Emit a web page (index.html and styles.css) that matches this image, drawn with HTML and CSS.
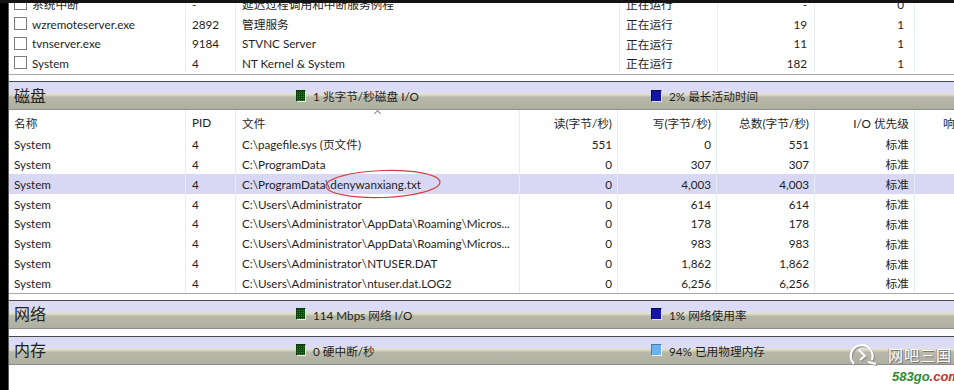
FILE: index.html
```html
<!DOCTYPE html>
<html lang="zh-CN">
<head>
    <meta charset="UTF-8">
    <meta name="viewport" content="width=device-width, initial-scale=1.0">
    <title>资源监视器</title>
    <link rel="stylesheet" href="styles.css">
</head>
<body>
    <div class="topbar"></div>
    <div class="window">
        <div class="proc-box">
            <div class="proc-list">
                <div class="prow">
                    <div class="cell name"><span class="chk"></span>系统中断</div>
                    <div class="cell">-</div>
                    <div class="cell">延迟过程调用和中断服务例程</div>
                    <div class="cell status">正在运行</div>
                    <div class="cell num thr">-</div>
                    <div class="cell num cpu">0</div>
                    <div class="cell last"></div>
                </div>
                <div class="prow">
                    <div class="cell name"><span class="chk"></span>wzremoteserver.exe</div>
                    <div class="cell">2892</div>
                    <div class="cell">管理服务</div>
                    <div class="cell status">正在运行</div>
                    <div class="cell num thr">19</div>
                    <div class="cell num cpu">1</div>
                    <div class="cell last"></div>
                </div>
                <div class="prow">
                    <div class="cell name"><span class="chk"></span>tvnserver.exe</div>
                    <div class="cell">9184</div>
                    <div class="cell">STVNC Server</div>
                    <div class="cell status">正在运行</div>
                    <div class="cell num thr">11</div>
                    <div class="cell num cpu">1</div>
                    <div class="cell last"></div>
                </div>
                <div class="prow">
                    <div class="cell name"><span class="chk"></span>System</div>
                    <div class="cell">4</div>
                    <div class="cell">NT Kernel &amp; System</div>
                    <div class="cell status">正在运行</div>
                    <div class="cell num thr">182</div>
                    <div class="cell num cpu">1</div>
                    <div class="cell last"></div>
                </div>
            </div>
        </div>

        <div class="section-head first">
            <div class="sec-title">磁盘</div>
            <div class="meter"><span class="ico green"></span>1 兆字节/秒磁盘 I/O</div>
            <div class="meter"><span class="ico blue"></span>2% 最长活动时间</div>
        </div>

        <div class="disk">
            <div class="drow head">
                <div class="cell">名称</div>
                <div class="cell">PID</div>
                <div class="cell sorted">文件</div>
                <div class="cell num">读(字节/秒)</div>
                <div class="cell num">写(字节/秒)</div>
                <div class="cell num">总数(字节/秒)</div>
                <div class="cell num">I/O 优先级</div>
                <div class="cell resp">响应时间(毫秒)</div>
            </div>
            <div class="drow">
                <div class="cell">System</div><div class="cell">4</div><div class="cell">C:\pagefile.sys (页文件)</div>
                <div class="cell num">551</div><div class="cell num">0</div><div class="cell num">551</div><div class="cell num">标准</div><div class="cell resp"></div>
            </div>
            <div class="drow">
                <div class="cell">System</div><div class="cell">4</div><div class="cell">C:\ProgramData</div>
                <div class="cell num">0</div><div class="cell num">307</div><div class="cell num">307</div><div class="cell num">标准</div><div class="cell resp"></div>
            </div>
            <div class="drow selected">
                <div class="cell">System</div><div class="cell">4</div><div class="cell">C:\ProgramData\denywanxiang.txt</div>
                <div class="cell num">0</div><div class="cell num">4,003</div><div class="cell num">4,003</div><div class="cell num">标准</div><div class="cell resp"></div>
            </div>
            <div class="drow">
                <div class="cell">System</div><div class="cell">4</div><div class="cell">C:\Users\Administrator</div>
                <div class="cell num">0</div><div class="cell num">614</div><div class="cell num">614</div><div class="cell num">标准</div><div class="cell resp"></div>
            </div>
            <div class="drow">
                <div class="cell">System</div><div class="cell">4</div><div class="cell">C:\Users\Administrator\AppData\Roaming\Micros...</div>
                <div class="cell num">0</div><div class="cell num">178</div><div class="cell num">178</div><div class="cell num">标准</div><div class="cell resp"></div>
            </div>
            <div class="drow">
                <div class="cell">System</div><div class="cell">4</div><div class="cell">C:\Users\Administrator\AppData\Roaming\Micros...</div>
                <div class="cell num">0</div><div class="cell num">983</div><div class="cell num">983</div><div class="cell num">标准</div><div class="cell resp"></div>
            </div>
            <div class="drow">
                <div class="cell">System</div><div class="cell">4</div><div class="cell">C:\Users\Administrator\NTUSER.DAT</div>
                <div class="cell num">0</div><div class="cell num">1,862</div><div class="cell num">1,862</div><div class="cell num">标准</div><div class="cell resp"></div>
            </div>
            <div class="drow">
                <div class="cell">System</div><div class="cell">4</div><div class="cell">C:\Users\Administrator\ntuser.dat.LOG2</div>
                <div class="cell num">0</div><div class="cell num">6,256</div><div class="cell num">6,256</div><div class="cell num">标准</div><div class="cell resp"></div>
            </div>
        </div>

        <div class="section-head net">
            <div class="sec-title">网络</div>
            <div class="meter"><span class="ico green"></span>114 Mbps 网络 I/O</div>
            <div class="meter"><span class="ico blue"></span>1% 网络使用率</div>
        </div>

        <div class="section-head mem">
            <div class="sec-title">内存</div>
            <div class="meter"><span class="ico green"></span>0 硬中断/秒</div>
            <div class="meter"><span class="ico light"></span>94% 已用物理内存</div>
        </div>
    </div>

    <!-- red marker drawn around the file name -->
    <svg class="circle-mark" width="120" height="34" viewBox="0 0 120 34">
        <ellipse cx="59" cy="16" rx="57" ry="13.5" transform="rotate(-2 59 16)" fill="none" stroke="#d2403f" stroke-width="1.2"/>
    </svg>

    <div class="watermark">
        <div class="wm-top">
            <svg width="36" height="28" viewBox="0 0 36 28">
                <path d="M8 24 A11 11 0 1 1 26 20" fill="none" stroke="#fff" stroke-width="2.2"/>
                <path d="M13 10 L19 16 L14 20" fill="none" stroke="#fff" stroke-width="2"/>
                <path d="M22 22 L30 24" fill="none" stroke="#fff" stroke-width="2"/>
            </svg>
            <span class="wm-name">网吧三国</span>
        </div>
        <div class="wm-site"><span class="g">583go</span><span class="r">.com</span></div>
    </div>
</body>
</html>
```

FILE: styles.css
```css
body {
    margin: 0;
    height: 390px;
    overflow: hidden;
    position: relative;
    background: #000;
    font-family: Lato, "Noto Sans CJK SC", sans-serif;
    font-size: 11.7px;
    color: #1e1e1e;
}
.topbar {
    height: 3px;
    background: #141414;
}
.window {
    margin-left: 8px;
    height: 387px;
    background: #fff;
    border-left: 1px solid #5c5c5c;
}

/* process list at the top, scrolled so the first row is cut */
.proc-box {
    height: 71px;
    overflow: hidden;
    border-bottom: 1px solid #a9a9a9;
}
.proc-list {
    margin-top: -9px;
}
.prow {
    display: grid;
    grid-template-columns: 177px 50px 384px 98px 97px 100px 1fr;
    height: 19.7px;
    align-items: stretch;
}
.cell {
    display: flex;
    align-items: center;
    padding: 0 5px 0 6px;
    white-space: nowrap;
    overflow: hidden;
    border-right: 1px solid #e6eef4;
}
.cell.num {
    justify-content: flex-end;
}
.prow .name {
    padding-left: 5px;
}
.prow .thr {
    padding-right: 7px;
}
.prow .cpu {
    padding-right: 10px;
}
.prow .last {
    border-right: none;
}
.chk {
    width: 11px;
    height: 11px;
    border: 1px solid #7c7c7c;
    background: #fff;
    margin-right: 5px;
    flex: none;
}

/* section header bars */
.section-head {
    height: 27px;
    border-top: 1px solid #4b4b4b;
    border-bottom: 1px solid #8e8e8e;
    background: linear-gradient(#dadaf6 0, #dcdcf5 11px, #e3e3cb 12px, #cfcfba 14px, #b9b9aa 15px, #afafa1 100%);
    display: grid;
    grid-template-columns: 282px 355px 1fr;
    align-items: center;
    padding-left: 5px;
}
.section-head.first {
    margin-top: 6px;
}
.section-head.net {
    margin-top: 6px;
}
.section-head.mem {
    margin-top: 7px;
}
.sec-title {
    font-size: 16px;
    color: #222;
    margin-top: -2px;
}
.meter {
    display: flex;
    align-items: center;
    gap: 7px;
}
.ico {
    width: 8px;
    height: 10px;
    border: 1px solid #0e3a0e;
    border-right-color: #e8f0e8;
    border-bottom-color: #e8f0e8;
}
.ico.green {
    background-color: #1e8c1e;
    background-image:
        repeating-linear-gradient(90deg, transparent 0 1px, #0b4a0b 1px 2px),
        repeating-linear-gradient(0deg, transparent 0 1px, #0b4a0b 1px 2px);
}
.ico.blue {
    background: #1414a8;
    border-color: #0a0a50;
    border-right-color: #e0e0f0;
    border-bottom-color: #e0e0f0;
    width: 9px;
}
.ico.light {
    background: #6cb2ee;
    border-color: #4a7ab0;
    border-right-color: #f0f4ff;
    border-bottom-color: #f0f4ff;
    width: 9px;
}

/* disk activity table */
.disk {
    border-bottom: 1px solid #a9a9a9;
}
.drow {
    display: grid;
    grid-template-columns: 177px 50px 284px 98px 99px 98px 100px 1fr;
    height: 19.86px;
}
.drow.head {
    height: 24px;
    position: relative;
}
.drow.head .cell.num,
.drow .cell.num {
    padding-right: 5px;
}
.drow .cell:first-child {
    padding-left: 5px;
}
.drow .resp {
    padding-left: 28px;
    border-right: none;
}
.drow.selected {
    background: #d8d8f4;
}
.sorted {
    position: relative;
}
.sorted::before {
    content: "";
    position: absolute;
    left: 139px;
    top: 1px;
    width: 4px;
    height: 4px;
    border-left: 1px solid #8a8a8a;
    border-top: 1px solid #8a8a8a;
    transform: rotate(45deg);
}

/* annotation and watermark overlays */
.circle-mark {
    position: absolute;
    left: 324px;
    top: 168px;
}
.watermark {
    position: absolute;
    left: 846px;
    top: 340px;
    width: 108px;
}
.wm-top {
    display: flex;
    align-items: center;
    gap: 6px;
}
.wm-top svg {
    filter: drop-shadow(1px 1px 0 #8a8a8a);
}
.wm-name {
    color: #fff;
    font-size: 15px;
    letter-spacing: 1px;
    text-shadow: 1px 1px 0 #7a7a7a, -1px 0 0 #a0a0a0;
}
.wm-site {
    margin-left: 46px;
    margin-top: 1px;
    font-family: "Liberation Sans", sans-serif;
    font-size: 13px;
    font-weight: bold;
    font-style: italic;
}
.wm-site .g {
    color: #2e8b2e;
}
.wm-site .r {
    color: #c8302a;
}
```
